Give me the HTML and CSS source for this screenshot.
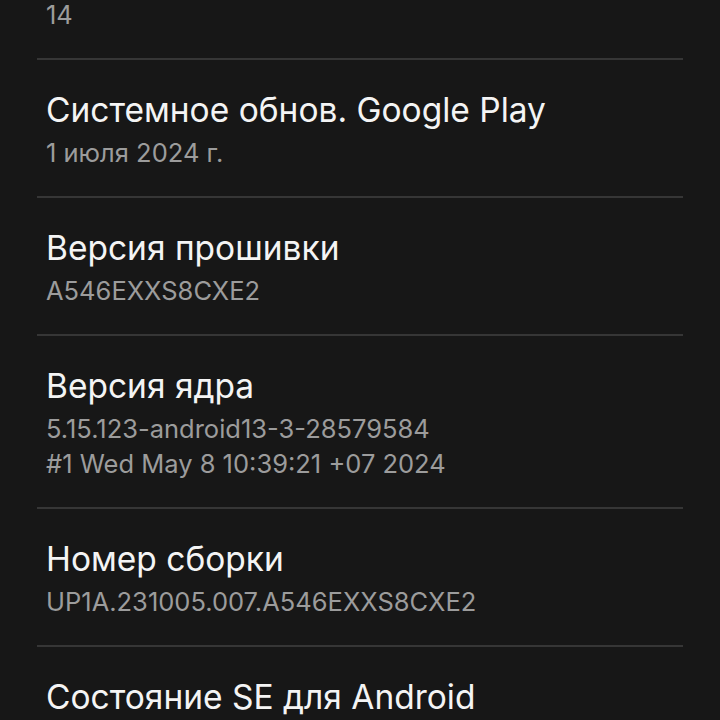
FILE: index.html
```html
<!DOCTYPE html>
<html lang="ru">
<head>
<meta charset="utf-8">
<link rel="stylesheet" href="styles.css">
</head>
<body>
<div class="list">
  <div class="row">
    <div class="title">Версия Android</div>
    <div class="sub">14</div>
  </div>
  <div class="row">
    <div class="title">Системное обнов. Google Play</div>
    <div class="sub">1 июля 2024 г.</div>
  </div>
  <div class="row">
    <div class="title">Версия прошивки</div>
    <div class="sub">A546EXXS8CXE2</div>
  </div>
  <div class="row">
    <div class="title">Версия ядра</div>
    <div class="sub">5.15.123-android13-3-28579584</div>
    <div class="sub">#1 Wed May 8 10:39:21 +07 2024</div>
  </div>
  <div class="row">
    <div class="title">Номер сборки</div>
    <div class="sub">UP1A.231005.007.A546EXXS8CXE2</div>
  </div>
  <div class="row">
    <div class="title">Состояние SE для Android</div>
    <div class="sub">Enforcing</div>
  </div>
</div>
</body>
</html>
```

FILE: styles.css
```css
html, body {
  margin: 0;
  padding: 0;
  background: #171717;
  height: 100%;
  overflow: hidden;
}
body {
  font-family: Inter, Roboto, "Noto Sans", sans-serif;
}
.list {
  margin: -78px 37px 0 37px;
}
.row {
  padding: 28px 9px 26px 9px;
  border-bottom: 2px solid #363636;
}
.title {
  color: #f4f4f4;
  font-size: 33.5px;
  line-height: 44px;
}
.title + .sub {
  margin-top: 3px;
}
.sub {
  color: #9c9c9c;
  font-size: 25.5px;
  line-height: 35px;
}
```
